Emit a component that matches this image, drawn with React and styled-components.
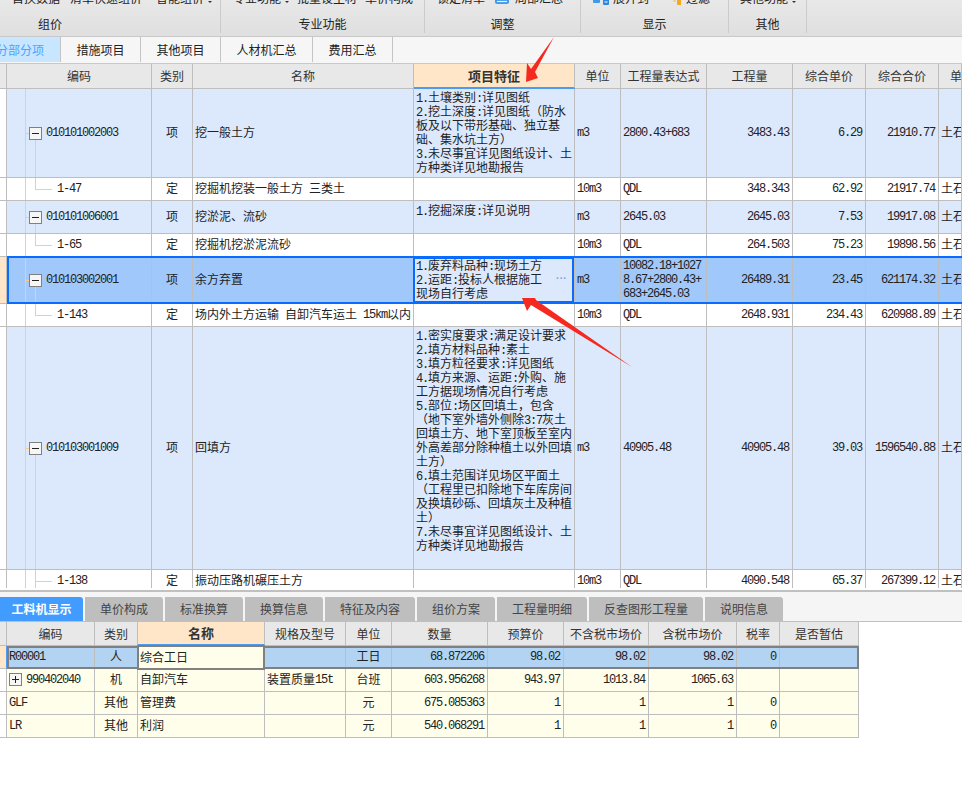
import React from 'react'
import styled, { createGlobalStyle } from 'styled-components'

const GlobalStyle = createGlobalStyle`
  html, body {
    margin: 0;
    padding: 0;
    background: #fff;
    overflow: hidden;
  }
  * {
    box-sizing: border-box;
  }
`

const Page = styled.div`
  position: relative;
  width: 962px;
  height: 800px;
  overflow: hidden;
  font-family: "Noto Sans CJK SC", "Liberation Sans", sans-serif;
  font-size: 12px;
  line-height: 14px;
  color: #222;
  background: #fff;
`

const Lat = styled.span`
  font-family: "Liberation Mono", monospace;
  font-size: 12px;
  letter-spacing: -1.2px;
  line-height: 1;
  white-space: pre;
`

const Ribbon = styled.div`
  display: flex;
  height: 37px;
  overflow: hidden;
  background: linear-gradient(to bottom, #e8e8e8, #dfdfdf);
  border-bottom: 1px solid #c9c9c9;
`

const Group = styled.div`
  flex: none;
  width: ${(p) => p.$width}px;
  margin-left: ${(p) => p.$shift || 0}px;
  height: 33px;
  border-right: 1px solid #cbcbcb;
`

const ToolRow = styled.div`
  display: flex;
  align-items: flex-end;
  height: 5px;
  overflow: hidden;
  padding-left: ${(p) => p.$pad}px;
`

const Tool = styled.span`
  flex: none;
  margin-left: ${(p) => p.$gap || 0}px;
  white-space: nowrap;
`

const ToolIcon = styled.svg`
  flex: none;
  width: ${(p) => p.$size || 16}px;
  height: 16px;
  margin-left: ${(p) => p.$gap || 0}px;
`

const Caret = styled.span`
  flex: none;
  width: 0;
  height: 0;
  margin-left: 4px;
  margin-bottom: 2px;
  border-left: 2px solid transparent;
  border-right: 2px solid transparent;
  border-top: 2px solid #333;
`

const GroupLabel = styled.div`
  margin-top: 12px;
  text-align: center;
`

const TabStrip = styled.div`
  display: flex;
  height: 27px;
  background: #f6f6f6;
  border-bottom: 1px solid #c8c8c8;
`

const SheetTab = styled.div`
  flex: none;
  width: ${(p) => p.$width}px;
  display: flex;
  align-items: center;
  justify-content: center;
  padding-right: ${(p) => (p.$active ? 20 : 0)}px;
  white-space: nowrap;
  border-right: 1px solid #c4c4c4;
  margin-bottom: 1px;
  background: ${(p) => (p.$active ? '#c8e6ff' : 'transparent')};
  color: ${(p) => (p.$active ? '#4da3ff' : '#222')};
`

const TopTable = styled.div`
  height: 524px;
  overflow: hidden;
  margin-bottom: 2px;
`

const Row = styled.div`
  position: relative;
  display: grid;
  grid-template-columns: ${(p) => p.$cols};
  width: ${(p) => p.$width || '100%'};
  height: ${(p) => p.$height}px;
`

const Cell = styled.div`
  display: flex;
  align-items: center;
  justify-content: ${(p) => p.$align || 'flex-start'};
  min-width: 0;
  overflow: hidden;
  white-space: nowrap;
  padding: 0 ${(p) => (p.$align === 'flex-end' ? 3 : p.$align === 'center' ? 0 : 2)}px 2px;
  border-right: 1px solid #bebebe;
  border-bottom: 1px solid #bebebe;
  background: ${(p) => p.$bg || 'transparent'};

  & > ${Lat} {
    position: relative;
    top: 1px;
  }
`

const HeadCell = styled(Cell)`
  justify-content: ${(p) => (p.$clip ? 'flex-start' : 'center')};
  padding: 0 0 0 ${(p) => (p.$clip ? 11 : 0)}px;
  background: ${(p) => (p.$hot ? '#ffe6c8' : '#e8e8e8')};
  font-size: ${(p) => (p.$hot ? 13 : 12)}px;
  font-weight: ${(p) => (p.$hot ? 700 : 400)};
  color: #333;
  border-bottom: ${(p) => (p.$hot ? '2px solid #4b9bf0' : '1px solid #bebebe')};
`

const Marker = styled(Cell)`
  padding: 0;
  background: ${(p) => (p.$on ? '#ffe6c8' : '#fff')};
  border-right-color: ${(p) => (p.$blue ? '#4b9bf0' : '#bebebe')};
`

const CodeCell = styled(Cell)`
  position: relative;
  padding-left: ${(p) => (p.$child ? 50 : 39)}px;
  background: ${(p) => p.$bg};
`

const TreeLine = styled.i`
  position: absolute;
  left: ${(p) => p.$x}px;
  width: 1px;
  top: ${(p) => (p.$from === 'mid' ? '50%' : '0')};
  bottom: ${(p) => (p.$to === 'mid' ? '50%' : '0')};
  background: #ffc98a;
`

const TreeTick = styled.i`
  position: absolute;
  left: ${(p) => p.$x}px;
  width: ${(p) => p.$w}px;
  top: 50%;
  height: 1px;
  background: #ffc98a;
`

const Toggle = styled.span`
  position: ${(p) => (p.$inline ? 'relative' : 'absolute')};
  left: ${(p) => (p.$inline ? 'auto' : '22px')};
  top: ${(p) => (p.$inline ? 'auto' : 'calc(50% - 6px)')};
  flex: none;
  width: 13px;
  height: 13px;
  margin-right: ${(p) => (p.$inline ? 4 : 0)}px;
  background: #f6f6f6;
  border: 1px solid #808080;

  &::before {
    content: '';
    position: absolute;
    left: 2px;
    right: 2px;
    top: 5px;
    height: 1px;
    background: #222;
  }

  &::after {
    content: '';
    display: ${(p) => (p.$plus ? 'block' : 'none')};
    position: absolute;
    top: 2px;
    bottom: 2px;
    left: 5px;
    width: 1px;
    background: #222;
  }
`

const FeatureCell = styled(Cell)`
  position: relative;
  display: block;
  padding: ${(p) => p.$top}px 0 0 2px;
  overflow: visible;
`

const ActiveFrame = styled.i`
  position: absolute;
  top: 0;
  left: -1px;
  right: 0;
  bottom: 0;
  border: 2px solid #0a6cff;
`

const MoreDots = styled.span`
  position: absolute;
  right: 7px;
  top: 15px;
  font-family: "Liberation Sans", sans-serif;
  font-weight: 700;
  font-size: 10px;
  letter-spacing: 0.3px;
  color: #6ea8dc;
`

const TextLine = styled.div`
  height: 14px;
  white-space: nowrap;
`

const ExprLine = styled.div`
  display: flex;
  align-items: center;
  height: 14px;
  white-space: nowrap;

  & > ${Lat} {
    position: relative;
    top: 1px;
  }
`

const Lines = styled.div`
  display: block;
`

const SelectFrame = styled.i`
  position: absolute;
  z-index: 2;
  top: ${(p) => p.$top}px;
  left: 7px;
  right: ${(p) => p.$right}px;
  bottom: ${(p) => p.$bottom}px;
  border: 2px solid ${(p) => p.$color};
  pointer-events: none;
`

const NameEdit = styled(Cell)`
  position: relative;
  z-index: 3;
  background: #fffeea;
  border: 2px solid #808080;
  margin: -1px 0 -1px -1px;
  padding-left: 1px;
`

const PaneDivider = styled.div`
  height: 2px;
  background: #c0c0c0;
`

const DetailTabs = styled.div`
  display: flex;
  gap: 2px;
  height: 30px;
  padding-top: 5px;
  background: #f5f5f5;
  border-bottom: 1px solid #c0c0c0;
`

const DetailTab = styled.div`
  flex: none;
  width: ${(p) => p.$width}px;
  display: flex;
  align-items: center;
  justify-content: center;
  white-space: nowrap;
  border-radius: 0 3px 0 0;
  background: ${(p) => (p.$active ? '#429bff' : '#bebebe')};
  color: ${(p) => (p.$active ? '#fff' : '#444')};
  font-weight: ${(p) => (p.$active ? 700 : 400)};
`

const ArrowLayer = styled.svg`
  position: absolute;
  left: 0;
  top: 0;
  z-index: 5;
  pointer-events: none;
`

// latin runs are squeezed so they come out half the width of a CJK glyph
const Txt = ({ children }) => {
  if (children === undefined || children === '') return null
  return String(children)
    .split(/([\x20-\x7e]+)/)
    .map((part, i) =>
      /^[\x20-\x7e]/.test(part) ? <Lat key={i}>{part}</Lat> : part
    )
}

const TOP_COLS = '7px 145px 41px 221px 161px 46px 86px 86px 73px 73px 1fr'
const BOTTOM_COLS = '7px 88px 43px 127px 81px 46px 96px 76px 85px 88px 43px 79px'

const PARENT_BG = '#dce9fd'
const SELECT_BG = '#a0c8fb'
const ROW_BG = '#fffeea'
const BOTTOM_SELECT_BG = '#b2d4f2'

const topHead = ['编码', '类别', '名称', '项目特征', '单位', '工程量表达式', '工程量', '综合单价', '综合合价']

const topRows = [
  {
    height: 89, code: '010101002003', type: '项', name: '挖一般土方', unit: 'm3',
    expr: ['2800.43+683'], qty: '3483.43', price: '6.29', total: '21910.77', top: 1,
    feature: ['1.土壤类别:详见图纸', '2.挖土深度:详见图纸（防水', '板及以下带形基础、独立基', '础、集水坑土方）', '3.未尽事宜详见图纸设计、土', '方种类详见地勘报告'],
  },
  {
    height: 23, child: true, code: '1-47', type: '定', name: '挖掘机挖装一般土方 三类土', unit: '10m3',
    expr: ['QDL'], qty: '348.343', price: '62.92', total: '21917.74',
  },
  {
    height: 33, code: '010101006001', type: '项', name: '挖淤泥、流砂', unit: 'm3',
    expr: ['2645.03'], qty: '2645.03', price: '7.53', total: '19917.08', top: 2,
    feature: ['1.挖掘深度:详见说明'],
  },
  {
    height: 23, child: true, code: '1-65', type: '定', name: '挖掘机挖淤泥流砂', unit: '10m3',
    expr: ['QDL'], qty: '264.503', price: '75.23', total: '19898.56',
  },
  {
    height: 47, selected: true, code: '010103002001', type: '项', name: '余方弃置', unit: 'm3',
    expr: ['10082.18+1027', '8.67+2800.43+', '683+2645.03'], qty: '26489.31', price: '23.45', total: '621174.32', top: 1,
    feature: ['1.废弃料品种:现场土方', '2.运距:投标人根据施工', '现场自行考虑'],
  },
  {
    height: 23, child: true, code: '1-143', type: '定', name: '场内外土方运输 自卸汽车运土 15km以内', unit: '10m3',
    expr: ['QDL'], qty: '2648.931', price: '234.43', total: '620988.89',
  },
  {
    height: 243, code: '010103001009', type: '项', name: '回填方', unit: 'm3',
    expr: ['40905.48'], qty: '40905.48', price: '39.03', total: '1596540.88', top: 1,
    feature: ['1.密实度要求:满足设计要求', '2.填方材料品种:素土', '3.填方粒径要求:详见图纸', '4.填方来源、运距:外购、施', '工方据现场情况自行考虑', '5.部位:场区回填土，包含', '（地下室外墙外侧除3:7灰土', '回填土方、地下室顶板至室内', '外高差部分除种植土以外回填', '土方）', '6.填土范围详见场区平面土', '（工程里已扣除地下车库房间', '及换填砂砾、回填灰土及种植', '土）', '7.未尽事宜详见图纸设计、土', '方种类详见地勘报告'],
  },
  {
    height: 23, child: true, through: true, code: '1-138', type: '定', name: '振动压路机碾压土方', unit: '10m3',
    expr: ['QDL'], qty: '4090.548', price: '65.37', total: '267399.12',
  },
]

const bottomHead = ['编码', '类别', '名称', '规格及型号', '单位', '数量', '预算价', '不含税市场价', '含税市场价', '税率', '是否暂估']

const bottomRows = [
  { code: 'R00001', type: '人', name: '综合工日', spec: '', unit: '工日', qty: '68.872206', budget: '98.02', net: '98.02', gross: '98.02', tax: '0', selected: true },
  { code: '990402040', plus: true, type: '机', name: '自卸汽车', spec: '装置质量15t', unit: '台班', qty: '603.956268', budget: '943.97', net: '1013.84', gross: '1065.63', tax: '' },
  { code: 'GLF', type: '其他', name: '管理费', spec: '', unit: '元', qty: '675.085363', budget: '1', net: '1', gross: '1', tax: '0' },
  { code: 'LR', type: '其他', name: '利润', spec: '', unit: '元', qty: '540.068291', budget: '1', net: '1', gross: '1', tax: '0' },
]

const sheetTabs = [
  { label: '分部分项', width: 61, active: true },
  { label: '措施项目', width: 80 },
  { label: '其他项目', width: 80 },
  { label: '人材机汇总', width: 92 },
  { label: '费用汇总', width: 80 },
]

const detailTabs = [
  { label: '工料机显示', width: 83, active: true },
  { label: '单价构成', width: 78 },
  { label: '标准换算', width: 78 },
  { label: '换算信息', width: 78 },
  { label: '特征及内容', width: 90 },
  { label: '组价方案', width: 78 },
  { label: '工程量明细', width: 90 },
  { label: '反查图形工程量', width: 114 },
  { label: '说明信息', width: 78 },
]

const SummaryIcon = ({ gap }) => (
  <ToolIcon $gap={gap} viewBox="0 0 16 16">
    <rect x="1" y="0" width="14" height="15" rx="2" fill="#3d9be9" />
    <path d="M3 12.5h10" stroke="#e8f3fc" strokeWidth="1.2" />
  </ToolIcon>
)

const ExpandIcon = ({ gap }) => (
  <ToolIcon $gap={gap} viewBox="0 0 16 16">
    <path d="M0 8h7v5a1 1 0 0 1-1 1H1a1 1 0 0 1-1-1z" fill="#3d9be9" />
    <rect x="10" y="6" width="6" height="10" rx="1" fill="#2f86de" />
    <path d="M11.5 13h3" stroke="#fff" strokeWidth="1" />
  </ToolIcon>
)

const FilterIcon = ({ gap }) => (
  <ToolIcon $gap={gap} $size={10} viewBox="0 0 10 16">
    <path d="M5 0h4v16H6a1 1 0 0 1-1-1z" fill="#f5a623" />
    <path d="M1 0h3v13H2a1 1 0 0 1-1-1z" fill="#fbd27a" />
  </ToolIcon>
)

const RibbonBar = () => (
  <Ribbon>
    <Group $width={341} $shift={-120}>
      <ToolRow $pad={120}>
        <Tool $gap={12}>首换数据</Tool>
        <Tool $gap={10}>清单快速组价</Tool>
        <Tool $gap={14}>智能组价</Tool>
        <Caret />
      </ToolRow>
      <GroupLabel>组价</GroupLabel>
    </Group>
    <Group $width={204}>
      <ToolRow $pad={12}>
        <Tool>专业功能</Tool>
        <Caret />
        <Tool $gap={8}>批量设主材</Tool>
        <Tool $gap={8}>单价构成</Tool>
      </ToolRow>
      <GroupLabel>专业功能</GroupLabel>
    </Group>
    <Group $width={156}>
      <ToolRow $pad={12}>
        <Tool>锁定清单</Tool>
        <SummaryIcon gap={9} />
        <Tool $gap={5}>局部汇总</Tool>
      </ToolRow>
      <GroupLabel>调整</GroupLabel>
    </Group>
    <Group $width={148}>
      <ToolRow $pad={12}>
        <ExpandIcon />
        <Tool $gap={4}>展开到</Tool>
        <FilterIcon gap={23} />
        <Tool $gap={4}>过滤</Tool>
      </ToolRow>
      <GroupLabel>显示</GroupLabel>
    </Group>
    <Group $width={78}>
      <ToolRow $pad={11}>
        <Tool>其他功能</Tool>
        <Caret />
      </ToolRow>
      <GroupLabel>其他</GroupLabel>
    </Group>
  </Ribbon>
)

const TopRow = ({ row }) => {
  const bg = row.selected ? SELECT_BG : row.child ? '#fff' : PARENT_BG
  return (
    <Row $cols={TOP_COLS} $height={row.height}>
      <Marker $on={row.selected} />
      <CodeCell $bg={bg} $child={row.child}>
        <TreeLine $x={18} />
        {row.child ? (
          <>
            <TreeLine $x={28} $to={row.through ? undefined : 'mid'} />
            <TreeTick $x={28} $w={17} />
          </>
        ) : (
          <>
            <TreeLine $x={28} $from="mid" />
            <TreeTick $x={18} $w={4} />
            <Toggle />
          </>
        )}
        <Txt>{row.code}</Txt>
      </CodeCell>
      <Cell $bg={bg} $align="center">{row.type}</Cell>
      <Cell $bg={bg}><Txt>{row.name}</Txt></Cell>
      <FeatureCell $bg={row.selected ? PARENT_BG : bg} $top={row.top || 0}>
        {(row.feature || []).map((line) => (
          <TextLine key={line}><Txt>{line}</Txt></TextLine>
        ))}
        {row.selected && (
          <>
            <ActiveFrame />
            <MoreDots>···</MoreDots>
          </>
        )}
      </FeatureCell>
      <Cell $bg={bg}><Txt>{row.unit}</Txt></Cell>
      <Cell $bg={bg}>
        <Lines>
          {row.expr.map((line) => (
            <ExprLine key={line}><Txt>{line}</Txt></ExprLine>
          ))}
        </Lines>
      </Cell>
      <Cell $bg={bg} $align="flex-end"><Txt>{row.qty}</Txt></Cell>
      <Cell $bg={bg} $align="flex-end"><Txt>{row.price}</Txt></Cell>
      <Cell $bg={bg} $align="flex-end"><Txt>{row.total}</Txt></Cell>
      <Cell $bg={bg}>土石方</Cell>
      {row.selected && <SelectFrame $color="#0a6cff" $top={-1} $right={-3} $bottom={0} />}
    </Row>
  )
}

const BottomRow = ({ row }) => {
  const bg = row.selected ? BOTTOM_SELECT_BG : ROW_BG
  return (
    <Row $cols={BOTTOM_COLS} $height={23} $width="859px">
      <Marker $on={row.selected} $blue={row.selected} />
      <Cell $bg={bg}>
        {row.plus && <Toggle $inline $plus />}
        <Txt>{row.code}</Txt>
      </Cell>
      <Cell $bg={bg} $align="center">{row.type}</Cell>
      {row.selected ? <NameEdit>{row.name}</NameEdit> : <Cell $bg={bg}>{row.name}</Cell>}
      <Cell $bg={bg}><Txt>{row.spec}</Txt></Cell>
      <Cell $bg={bg} $align="center">{row.unit}</Cell>
      <Cell $bg={bg} $align="flex-end"><Txt>{row.qty}</Txt></Cell>
      <Cell $bg={bg} $align="flex-end"><Txt>{row.budget}</Txt></Cell>
      <Cell $bg={bg} $align="flex-end"><Txt>{row.net}</Txt></Cell>
      <Cell $bg={bg} $align="flex-end"><Txt>{row.gross}</Txt></Cell>
      <Cell $bg={bg} $align="flex-end"><Txt>{row.tax}</Txt></Cell>
      <Cell $bg={bg} />
      {row.selected && <SelectFrame $color="#808080" $top={0} $right={0} $bottom={0} />}
    </Row>
  )
}

const App = () => (
  <Page>
    <GlobalStyle />
    <RibbonBar />
    <TabStrip>
      {sheetTabs.map((tab) => (
        <SheetTab key={tab.label} $width={tab.width} $active={tab.active}>{tab.label}</SheetTab>
      ))}
    </TabStrip>

    <TopTable>
      <Row $cols={TOP_COLS} $height={25}>
        <HeadCell />
        {topHead.map((label) => (
          <HeadCell key={label} $hot={label === '项目特征'}>{label}</HeadCell>
        ))}
        <HeadCell $clip>单位</HeadCell>
      </Row>
      {topRows.map((row) => (
        <TopRow key={row.code} row={row} />
      ))}
    </TopTable>

    <PaneDivider />
    <DetailTabs>
      {detailTabs.map((tab) => (
        <DetailTab key={tab.label} $width={tab.width} $active={tab.active}>{tab.label}</DetailTab>
      ))}
    </DetailTabs>

    <Row $cols={BOTTOM_COLS} $height={24} $width="859px">
      <HeadCell />
      {bottomHead.map((label) => (
        <HeadCell key={label} $hot={label === '名称'}>{label}</HeadCell>
      ))}
    </Row>
    {bottomRows.map((row) => (
      <BottomRow key={row.code} row={row} />
    ))}

    <ArrowLayer width="962" height="800" viewBox="0 0 962 800">
      <polygon points="554,37 535,72 538,78 526,82 527,63 531,69" fill="#f5291f" />
      <polygon points="632,367 536,300 535,298 522,298 527,311 531,305" fill="#f5291f" />
    </ArrowLayer>
  </Page>
)

export default App
